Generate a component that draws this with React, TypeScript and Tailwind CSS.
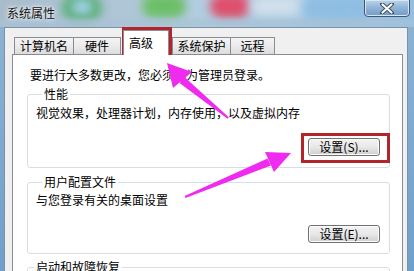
import React from "react";

const Tab = ({ label, w, className = "" }: { label: string; w: string; className?: string }) => (
  <div
    className={`${w} h-[17px] border border-b-0 border-[#898c95] bg-linear-to-b from-[#f4f4f4] via-[#ebebeb] to-[#dcdcdc] text-center leading-[16px] ${className}`}
  >
    {label}
  </div>
);

const Btn = ({ label, className = "" }: { label: string; className?: string }) => (
  <div
    className={`w-[72px] h-[18px] border border-[#707070] rounded-[3px] bg-linear-to-b from-[#f3f3f3] via-[#e8e8e8] to-[#cfcfcf] text-center leading-[16px] shadow-[inset_0_0_0_1px_#fcfcfc] ${className}`}
  >
    {label}
  </div>
);

export default function App() {
  return (
    <div className="relative w-[414px] h-[271px] overflow-hidden flex flex-col bg-linear-to-b from-[#8fb4d4] to-[#6f9fcb] font-['Noto_Sans_CJK_SC','Noto_Sans',sans-serif] text-[12px] text-black">
      {/* aero title bar */}
      <div className="relative h-[27px] shrink-0 overflow-hidden bg-linear-to-r from-[#a9bccb] via-[#b3cde0] to-[#94bfe2]">
        <div className="absolute left-[62px] top-[-6px] w-[40px] h-[28px] rounded-full bg-[#5cb07a] blur-[5px]" />
        <div className="absolute left-[72px] top-[0px] w-[20px] h-[14px] rounded-full bg-[#9fd0e8] blur-[4px]" />
        <div className="absolute left-[142px] top-[-6px] w-[44px] h-[24px] rounded-full bg-[#6cbf68] blur-[5px]" />
        <div className="absolute left-[210px] top-[-6px] w-[40px] h-[24px] rounded-full bg-[#de4f6c] blur-[5px]" />
        <div className="absolute left-[250px] top-[-4px] w-[60px] h-[20px] rounded-full bg-[#d2e1ec] blur-[6px]" />
        <div className="absolute left-[300px] top-[-4px] w-[70px] h-[24px] rounded-full bg-[#8ebde3] blur-[6px]" />
        <div className="absolute left-0 bottom-0 w-full h-[8px] bg-[#a8c2d6]/70 blur-[2px]" />
        <span className="relative block ml-[7px] leading-[26px] text-[12px] text-[#111] [text-shadow:0_0_6px_#ffffff,0_0_3px_#ffffff]">
          系统属性
        </span>
        {/* close button */}
        <div className="absolute left-[364px] top-[-1px] w-[46px] h-[18px] rounded-b-[4px] border border-[#3f5670] bg-linear-to-b from-[#bcd4ea] via-[#8fb3d6] to-[#6f9cc8] shadow-[inset_0_0_0_1px_#d8e6f2] flex items-center justify-center">
          <svg width="14" height="11" viewBox="0 0 14 11">
            <path d="M2 1 L12 10 M12 1 L2 10" stroke="#3c4a5c" strokeWidth="4" strokeLinecap="round" />
            <path d="M2.5 1.5 L11.5 9.5 M11.5 1.5 L2.5 9.5" stroke="#ffffff" strokeWidth="2.2" strokeLinecap="round" />
          </svg>
        </div>
      </div>

      {/* dialog body */}
      <div className="flex-1 ml-[4px] w-[404px] flex flex-col border border-b-0 border-[#7d91a6] bg-[#f0f0f0]">
        <div className="flex items-end pl-[9px] pt-[2px] h-[26px]">
          <Tab label="计算机名" w="w-[60px]" />
          <Tab label="硬件" w="w-[48px]" className="-ml-px" />
          <div className="relative z-10 ml-[2px] w-[46px] h-[25px] -mb-px border border-b-0 border-[#898c95] bg-white pl-[5px] leading-[24px]">
            高级
          </div>
          <Tab label="系统保护" w="w-[59px]" className="ml-[3px]" />
          <Tab label="远程" w="w-[45px]" className="-ml-px" />
        </div>

        <div className="flex-1 ml-[7px] w-[391px] border border-b-0 border-[#898c95] bg-white flex flex-col">
          <p className="pl-[17px] pt-[13px] leading-[14px]">要进行大多数更改，您必须作为管理员登录。</p>

          <fieldset className="ml-[14px] mt-[5px] w-[363px] border border-[#d5dfe5] rounded-[3px] pl-[8px] pr-[9px] pb-[11px]">
            <legend className="ml-[6px] px-[2px] leading-[14px]">性能</legend>
            <p className="pt-[5px] leading-[14px]">视觉效果，处理器计划，内存使用，以及虚拟内存</p>
            <div className="flex justify-end mt-[18px]">
              <Btn label="设置(S)..." />
            </div>
          </fieldset>

          <fieldset className="ml-[14px] mt-[7px] w-[363px] border border-[#d5dfe5] rounded-[3px] pl-[8px] pr-[9px] pb-[10px]">
            <legend className="ml-[6px] px-[2px] leading-[14px]">用户配置文件</legend>
            <p className="pt-[4px] leading-[14px]">与您登录有关的桌面设置</p>
            <div className="flex justify-end mt-[18px]">
              <Btn label="设置(E)..." />
            </div>
          </fieldset>

          <fieldset className="ml-[14px] mt-[6px] w-[363px] h-[40px] border border-[#d5dfe5] rounded-[3px]">
            <legend className="ml-[6px] px-[2px] leading-[14px]">启动和故障恢复</legend>
          </fieldset>
        </div>
      </div>

      {/* annotation: red boxes */}
      <div className="absolute left-[122px] top-[27px] w-[50px] h-[28px] border-[3px] border-[#b2262b]" />
      <div className="absolute left-[301px] top-[133px] w-[89px] h-[30px] border-[3px] border-[#b2262b]" />

      {/* annotation: pink arrows */}
      <svg className="absolute left-0 top-0 pointer-events-none" width="414" height="271" viewBox="0 0 414 271">
        <polygon points="167,63 173,88 192,72" fill="#ee2bee" />
        <polygon points="184.5,77 179.5,83 227.6,118.8 228.8,117.2" fill="#ee2bee" />
        <polygon points="291,153 265,152 274,172" fill="#ee2bee" />
        <polygon points="271,165.5 267.5,158.5 184.6,196.1 185.4,197.9" fill="#ee2bee" />
      </svg>
    </div>
  );
}
